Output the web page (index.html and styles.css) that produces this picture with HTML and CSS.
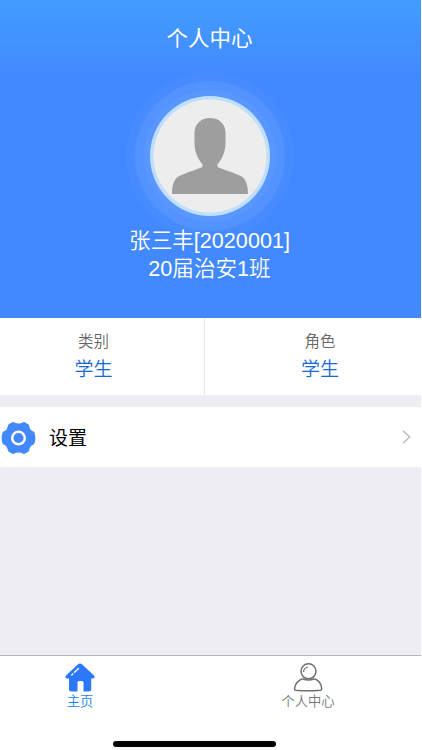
FILE: index.html
```
<!DOCTYPE html>
<html lang="zh-CN">
<head>
  <meta charset="UTF-8" />
  <title>个人中心</title>
  <meta name="viewport" content="width=device-width, initial-scale=1" />
  <link rel="stylesheet" href="styles.css">
</head>
<body>
  <div class="page">
    <!-- Profile header -->
    <header class="profile">
      <h1 class="title">个人中心</h1>
      <svg class="avatar" width="172" height="172" viewBox="0 0 172 172">
        <circle cx="86" cy="86" r="84" fill="#fff" fill-opacity="0.025" />
        <circle cx="86" cy="86" r="75" fill="#fff" fill-opacity="0.07" />
        <circle cx="86" cy="86" r="66" fill="#fff" fill-opacity="0.04" />
        <circle cx="86" cy="86" r="60" fill="#bfdfff" />
        <circle cx="86" cy="86" r="56.5" fill="#ededed" />
        <path fill="#9e9e9e" d="M86 48c9 0 15.500 6 15.500 15v10c0 9-3.500 16-8 21.500q-.7 2 1 3c5 2 13 4.500 20 7.500 6.500 2 9.500 8 9.500 19H48c0-11 3-17 9.500-19 7-3 15-5.500 20-7.500q1.700-1 1-3c-4.500-5.500-8-12.500-8-21.500V63c0-9 6.500-15 15.500-15z" />
      </svg>
      <div class="name">张三丰[2020001]</div>
      <div class="name">20届治安1班</div>
    </header>

    <section class="info">
      <div class="info-item">
        <div class="info-label">类别</div>
        <div class="info-value">学生</div>
      </div>
      <div class="info-item">
        <div class="info-label">角色</div>
        <div class="info-value">学生</div>
      </div>
    </section>

    <div class="row">
      <svg class="gear" width="35" height="34" viewBox="0 0 35 34">
        <path fill="#4289ff" stroke="#4289ff" stroke-width="3" stroke-linejoin="round" d="M8.500 4.500L12 2.500Q17.500 5.600 23 2.500L26.500 4.500Q27.500 10.500 32 12Q33.800 17 32 22Q27.500 23.500 26.500 29.500L23 31.500Q17.500 28.400 12 31.500L8.500 29.500Q7.500 23.500 3 22Q1.200 17 3 12Q7.500 10.500 8.500 4.500z" />
        <circle cx="17.500" cy="17" r="6.300" fill="#4289ff" stroke="#fff" stroke-width="2.400" />
      </svg>
      <span class="row-text">设置</span>
      <svg class="arrow" width="9" height="14" viewBox="0 0 9 14">
        <path fill="none" stroke="#b9b9bb" stroke-width="1.300" d="M1 .7l6.700 6.300L1 13.300" />
      </svg>
    </div>

    <!-- Bottom tabs -->
    <nav class="tabbar">
      <div class="tab active">
        <svg width="30" height="30" viewBox="0 0 30 30">
          <path fill="#2b78fb" d="M13 1.300q2-1.600 4 0l12.200 11.400q1.200 2.300-1.200 2.800h-1.800v10.500q0 2.500-2.500 2.500H18.500V19.500q0-1.500-1.500-1.500h-3q-1.500 0-1.500 1.500v9H6.500Q4 28.500 4 26V15.500H2q-2.400-.5-1.200-2.800z" />
          <path fill="none" stroke="#fff" stroke-width="1.400" stroke-linecap="round" d="M6.800 12l1-1M9.500 9.300l4-3.700" />
        </svg>
        <span>主页</span>
      </div>
      <div class="tab">
        <svg width="30" height="30" viewBox="0 0 30 30" fill="none" stroke="#707070" stroke-width="1.500">
          <circle cx="15.500" cy="8.300" r="7.500" />
          <path d="M9.500 15.800C4.500 17.500 2 22 1.500 26q0 1 1 1.200 12.500 1.200 25.200 0 1-.2 1-1.200C28.500 22 26 17.500 21.500 15.800" />
          <path d="M9.500 15.800q6 2.600 12 0" />
          <path stroke-width="1.200" d="M10.500 9q.3-4 4.500-5" />
        </svg>
        <span>个人中心</span>
      </div>
      <div class="home-bar"></div>
    </nav>
  </div>
</body>
</html>
```

FILE: styles.css
```
html, body {
  margin: 0;
  padding: 0;
  height: 100%;
  overflow: hidden;
  background: #fff;
  font-family: 'Liberation Sans', 'Noto Sans CJK SC', sans-serif;
}

.page {
  display: flex;
  flex-direction: column;
  width: 421px;
  height: 750px;
  background: #eeedf3;
}

.profile {
  display: flex;
  flex-direction: column;
  align-items: center;
  box-sizing: border-box;
  height: 318px;
  padding: 23px 2px 0 0;
  background: linear-gradient(#429dff 0, #4289ff 75px);
  color: #fff;
}

.title {
  margin: 0;
  font-size: 21.5px;
  font-weight: 400;
  line-height: 32px;
}

.avatar {
  display: block;
  flex-shrink: 0;
  margin: 15px 0 -15px;
}

.name {
  font-size: 21.6px;
  font-weight: 350;
  line-height: 28px;
}

.info {
  display: flex;
  height: 77px;
  background: #fff;
  text-align: center;
}

.info-item {
  box-sizing: border-box;
  width: 205px;
  padding: 12px 17px 0 0;
  border-right: 1px solid #e2e4f5;
}

.info-item:last-child {
  width: 216px;
  padding: 12px 0 0 14px;
  border-right: 0;
}

.info-label {
  color: #666;
  font-size: 15.5px;
  font-weight: 350;
  line-height: 24px;
}

.info-value {
  color: #1468dc;
  font-size: 19px;
  font-weight: 350;
  line-height: 32px;
}

.row {
  display: flex;
  align-items: center;
  height: 60px;
  margin-top: 12px;
  padding: 0 10px 0 1px;
  background: #fff;
}

.gear {
  margin-top: 1px;
}

.row-text {
  flex: 1;
  margin: -1px 0 0 13px;
  font-size: 19px;
}

.tabbar {
  position: relative;
  display: flex;
  box-sizing: border-box;
  height: 95px;
  margin-top: auto;
  padding: 7px 0 0;
  border-top: 1px solid #b5b5bb;
  background: #fff;
}

.tab {
  display: flex;
  flex-direction: column;
  align-items: center;
  width: 160px;
  color: #777;
  font-size: 13.3px;
  font-weight: 350;
  line-height: 18px;
}

.tab + .tab {
  width: 160px;
  margin-left: 68px;
}

.tab.active {
  color: #1a83e6;
}

.home-bar {
  position: absolute;
  left: 113px;
  bottom: 3px;
  width: 163px;
  height: 6px;
  border-radius: 3px;
  background: #000;
}
```
